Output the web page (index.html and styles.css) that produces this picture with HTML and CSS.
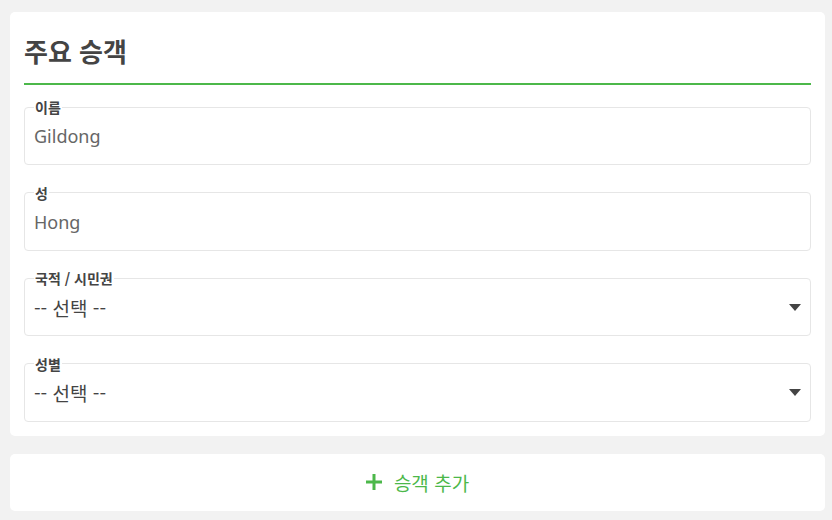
FILE: index.html
```html
<!DOCTYPE html>
<html lang="ko">
<head>
<meta charset="utf-8">
<title>주요 승객</title>
<link rel="stylesheet" href="styles.css">
</head>
<body>
<div class="page">
  <section class="card">
    <h2 class="card-title">주요 승객</h2>
    <div class="fields">
      <fieldset class="field">
        <legend>이름</legend>
        <input class="control" type="text" value="Gildong">
      </fieldset>
      <fieldset class="field">
        <legend>성</legend>
        <input class="control" type="text" value="Hong">
      </fieldset>
      <fieldset class="field">
        <legend>국적 / 시민권</legend>
        <div class="select-row">
          <select class="control select"><option>-- 선택 --</option></select>
          <svg class="caret" width="12" height="7" viewBox="0 0 12 7"><path d="M0 0H12L6 7Z" fill="#444"/></svg>
        </div>
      </fieldset>
      <fieldset class="field">
        <legend>성별</legend>
        <div class="select-row">
          <select class="control select"><option>-- 선택 --</option></select>
          <svg class="caret" width="12" height="7" viewBox="0 0 12 7"><path d="M0 0H12L6 7Z" fill="#444"/></svg>
        </div>
      </fieldset>
    </div>
  </section>
  <button class="card add-btn" type="button">
    <svg class="plus" width="16" height="16" viewBox="0 0 16 16"><path d="M8 0V16M0 8H16" stroke="#4cb84a" stroke-width="3"/></svg>
    <span>승객 추가</span>
  </button>
</div>
</body>
</html>
```
FILE: styles.css
```css
* { box-sizing: border-box; }
html, body { margin: 0; }
body {
  background: #f2f2f2;
  font-family: "Noto Sans", "Noto Sans CJK KR", sans-serif;
  color: #444;
}
.page {
  padding: 12px 7px 10px 10px;
  display: flex;
  flex-direction: column;
  gap: 18px;
}
.card {
  background: #fff;
  border-radius: 5px;
}
section.card {
  padding: 0 14px 14px;
}
.card-title {
  margin: 0;
  padding: 23px 0 16px;
  font-size: 26px;
  line-height: 32px;
  font-weight: 700;
  color: #444;
  border-bottom: 2px solid #4cb84a;
  font-family: "Noto Sans CJK KR", sans-serif;
}
.fields {
  display: flex;
  flex-direction: column;
  gap: 19.5px;
  padding-top: 14px;
}
.field {
  margin: 0;
  border: 1px solid #e6e6e6;
  border-radius: 4px;
  padding: 0 9px 11px;
  min-width: 0;
}
.field legend {
  padding: 0 1px;
  font-size: 14px;
  line-height: 16px;
  font-weight: 700;
  color: #444;
  font-family: "Noto Sans CJK KR", sans-serif;
}
.control {
  display: block;
  width: 100%;
  height: 34px;
  margin-top: 4px;
  border: none;
  padding: 0;
  background: transparent;
  font-family: "Noto Sans", "Noto Sans CJK KR", sans-serif;
  font-size: 18px;
  color: #666;
  outline: none;
}
.select-row {
  display: flex;
  align-items: center;
  margin-top: 4px;
}
.select {
  flex: 1;
  margin-top: 0;
  appearance: none;
  -webkit-appearance: none;
  color: #444;
  font-size: 19px;
  font-family: "Noto Sans CJK KR", sans-serif;
}
.caret { flex: none; }
.add-btn {
  height: 57px;
  border: none;
  display: flex;
  align-items: center;
  justify-content: center;
  gap: 12px;
  font-family: "Noto Sans CJK KR", sans-serif;
  font-size: 19px;
  color: #4cb84a;
  padding: 0;
  cursor: pointer;
}
.plus { flex: none; }
```
